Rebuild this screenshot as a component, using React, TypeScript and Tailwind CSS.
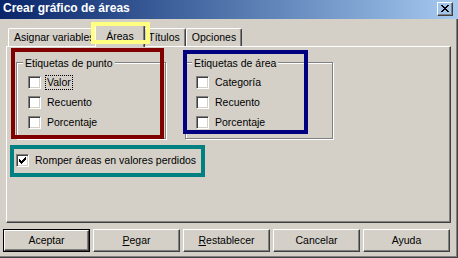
import { ReactNode } from "react";

const raised =
  "border border-t-white border-l-white border-r-[#404040] border-b-[#404040] shadow-[inset_-1px_-1px_0_#808080]";

function CheckBox({ checked }: { checked?: boolean }) {
  return (
    <span className="flex h-[13px] w-[13px] shrink-0 items-center justify-center border border-t-[#808080] border-l-[#808080] border-r-white border-b-white bg-white shadow-[inset_1px_1px_0_#404040,inset_-1px_-1px_0_#d4d0c8]">
      {checked && (
        <svg width="7" height="7" viewBox="0 0 7 7" shapeRendering="crispEdges" aria-hidden="true">
          <path
            fill="#000"
            d="M6 0h1v3h-1v1h-1v1h-1v1h-1v1h-1v-1h-1v-1h-1v-1H0V2h1v1h1v1h1V3h1V2h1V1h1z"
          />
        </svg>
      )}
    </span>
  );
}

function Option({ label, focused }: { label: string; focused?: boolean }) {
  return (
    <div className="flex h-[13px] items-center gap-[4px]">
      <CheckBox />
      <span
        className={`px-[1px] leading-[13px] border ${
          focused ? "border-dotted border-black" : "border-transparent"
        }`}
      >
        {label}
      </span>
    </div>
  );
}

function GroupBox({
  title,
  width,
  pad,
  children,
}: {
  title: string;
  width: string;
  pad: string;
  children: ReactNode;
}) {
  return (
    <div
      className={`relative h-[77px] border border-[#808080] shadow-[inset_1px_1px_0_#fff,1px_1px_0_#fff] ${width} ${pad}`}
    >
      <span className="absolute left-[6px] top-[-6px] bg-[#d4d0c8] px-[2px] leading-[13px] whitespace-nowrap">
        {title}
      </span>
      <div className="flex flex-col gap-[7px] pt-[13px]">{children}</div>
    </div>
  );
}

function Button({ children, isDefault }: { children: ReactNode; isDefault?: boolean }) {
  if (isDefault) {
    return (
      <div className="h-[23px] w-[87px] border border-black">
        <div className="flex h-full w-full items-center justify-center border border-t-white border-l-white border-r-[#404040] border-b-[#404040] shadow-[inset_-1px_-1px_0_#808080]">
          {children}
        </div>
      </div>
    );
  }
  return (
    <div className={`flex h-[23px] w-[87px] items-center justify-center ${raised}`}>
      {children}
    </div>
  );
}

export default function App() {
  return (
    <div className="relative flex h-[258px] w-[458px] flex-col overflow-hidden bg-[#d4d0c8] font-['Liberation_Sans',Arial,sans-serif] text-[10.5px] text-black shadow-[inset_-1px_-1px_0_#404040,inset_-2px_-2px_0_#808080]">
      {/* title bar */}
      <div className="flex h-[19px] shrink-0 items-center justify-between bg-gradient-to-r from-[#0a246a] to-[#a6caf0] pl-[3px] pr-[5px]">
        <span className="pb-[3px] text-[12px] font-bold leading-none text-white">
          Crear gráfico de áreas
        </span>
        <div className={`mb-[2px] flex h-[14px] w-[16px] items-center justify-center ${raised}`}>
          <svg width="8" height="7" viewBox="0 0 8 7" shapeRendering="crispEdges" aria-hidden="true">
            <path
              fill="#000"
              d="M0 0h2v1h1v1h2V1h1V0h2v1h-1v1h-1v1h-1v1h1v1h1v1h1v1h-2v-1h-1v-1h-2v1h-1v1H0v-1h1v-1h1v-1h1V3h-1V2h-1V1H0z"
            />
          </svg>
        </div>
      </div>

      {/* tabs */}
      <div className="ml-[8px] mt-[6px] flex h-[21px] items-end">
        <div className="h-[18px] w-[89px] overflow-hidden whitespace-nowrap rounded-tl-[2px] border-l border-t border-white pl-[5px] pt-[2px] leading-[13px]">
          Asignar variables
        </div>
        <div className="relative z-10 -mx-[2px] -mb-[1px] flex h-[22px] w-[50px] justify-center rounded-t-[2px] border-l border-t border-r border-white border-r-[#404040] bg-[#d4d0c8] pt-[4px] leading-[13px] shadow-[inset_-1px_0_0_#808080]">
          Áreas
        </div>
        <div className="flex h-[18px] w-[43px] justify-center whitespace-nowrap rounded-tr-[2px] border-t border-r border-white border-r-[#404040] pt-[2px] leading-[13px] shadow-[inset_-1px_0_0_#808080]">
          Títulos
        </div>
        <div className="flex h-[18px] w-[56px] justify-center whitespace-nowrap rounded-t-[2px] border-l border-t border-r border-white border-r-[#404040] pt-[2px] leading-[13px] shadow-[inset_-1px_0_0_#808080]">
          Opciones
        </div>
      </div>

      {/* panel */}
      <div className="ml-[6px] h-[177px] w-[445px] shrink-0 border border-t-white border-l-white border-r-[#404040] border-b-[#404040] pl-[9px] pt-[15px] shadow-[inset_-1px_-1px_0_#808080]">
        <div className="flex items-start gap-[19px]">
          <GroupBox title="Etiquetas de punto" width="w-[150px]" pad="pl-[11px]">
            <Option label="Valor" focused />
            <Option label="Recuento" />
            <Option label="Porcentaje" />
          </GroupBox>
          <GroupBox title="Etiquetas de área" width="w-[148px]" pad="pl-[10px]">
            <Option label="Categoría" />
            <Option label="Recuento" />
            <Option label="Porcentaje" />
          </GroupBox>
        </div>
        <div className="mt-[15px] flex h-[13px] items-center gap-[6px]">
          <CheckBox checked />
          <span className="leading-[13px]">Romper áreas en valores perdidos</span>
        </div>
      </div>

      {/* buttons */}
      <div className="ml-[3px] mt-[6px] flex gap-[3px]">
        <Button isDefault>Aceptar</Button>
        <Button>
          <span>
            <u>P</u>egar
          </span>
        </Button>
        <Button>
          <span>
            <u>R</u>establecer
          </span>
        </Button>
        <Button>Cancelar</Button>
        <Button>Ayuda</Button>
      </div>

      {/* highlight annotations */}
      <div className="pointer-events-none absolute left-[91px] top-[22px] z-20 h-[22px] w-[59px] border-[4px] border-[#ffff80]" />
      <div className="pointer-events-none absolute left-[11px] top-[48px] z-20 h-[91px] w-[153px] border-[4px] border-[#800000]" />
      <div className="pointer-events-none absolute left-[183px] top-[50px] z-20 h-[84px] w-[125px] border-[4px] border-[#000080]" />
      <div className="pointer-events-none absolute left-[10px] top-[145px] z-20 h-[32px] w-[195px] border-[4px] border-[#008080]" />
    </div>
  );
}
